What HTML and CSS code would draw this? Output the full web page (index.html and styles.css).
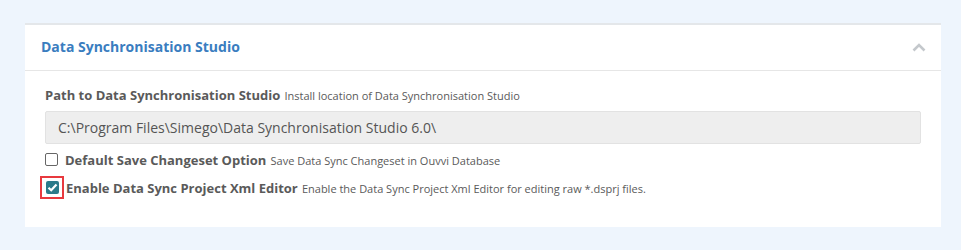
FILE: index.html
```html
<!DOCTYPE html>
<html lang="en">
  <head>
    <meta charset="UTF-8" />
    <meta name="viewport" content="width=device-width, initial-scale=1.0" />
    <title>Settings</title>
    <link rel="stylesheet" href="styles.css">
  </head>

  <body>
    <section class="panel">
      <header class="panel-heading">
        <h2>Data Synchronisation Studio</h2>
        <svg class="chevron" width="14" height="9" viewBox="0 0 14 9">
          <path d="M1.5 7.5 L7 2 L12.5 7.5" fill="none" stroke="#c4c8cc" stroke-width="2.6" />
        </svg>
      </header>

      <div class="panel-body">
        <div class="field">
          <label><b>Path to Data Synchronisation Studio</b> <small>Install location of Data Synchronisation Studio</small></label>
          <input type="text" value="C:\Program Files\Simego\Data Synchronisation Studio 6.0\" readonly />
        </div>

        <div class="check">
          <span class="box"></span>
          <label><b>Default Save Changeset Option</b> <small>Save Data Sync Changeset in Ouvvi Database</small></label>
        </div>

        <div class="check">
          <span class="highlight">
            <span class="box checked">
              <svg width="11" height="9" viewBox="0 0 11 9">
                <path d="M1.5 4.8 L4.2 7.3 L9.5 1.6" fill="none" stroke="#fff" stroke-width="2.2" />
              </svg>
            </span>
          </span>
          <label><b>Enable Data Sync Project Xml Editor</b> <small>Enable the Data Sync Project Xml Editor for editing raw *.dsprj files.</small></label>
        </div>
      </div>
    </section>
  </body>
</html>
```

FILE: styles.css
```css
body {
  margin: 0;
  padding: 23px 20px 0 25px;
  background-color: #eef5fd;
  font-family: "Open Sans", sans-serif;
  color: #5a5a5a;
}

.panel {
  background-color: #fff;
  border-top: 2px solid #e4e7ea;
  height: 202px;
}

.panel-heading {
  display: flex;
  align-items: center;
  justify-content: space-between;
  box-sizing: border-box;
  height: 46px;
  padding: 0 15px 2px 16px;
  border-bottom: 1px solid #e6e6e6;
}

.panel-heading h2 {
  margin: 0;
  font-size: 14px;
  font-weight: 700;
  color: #3a7dbf;
}

.chevron {
  margin-top: 2px;
}

.panel-body {
  padding: 14px 20px 0 20px;
}

.field label {
  display: block;
  line-height: 18px;
}

b {
  font-size: 13px;
  font-weight: 700;
  color: #5a5a5a;
}

small {
  font-size: 11px;
  color: #5a5a5a;
}

.field input {
  display: block;
  box-sizing: border-box;
  width: 100%;
  height: 33px;
  margin-top: 6px;
  padding: 0 12px;
  background-color: #eeeeee;
  border: 1px solid #e2e2e2;
  border-radius: 2px;
  font-family: "Open Sans", sans-serif;
  font-size: 14px;
  color: #555;
}

.check {
  display: flex;
  align-items: center;
  gap: 7px;
  margin-top: 9px;
  height: 13px;
}

.check + .check {
  margin-top: 15px;
}

.box {
  display: flex;
  align-items: center;
  justify-content: center;
  box-sizing: border-box;
  width: 13px;
  height: 13px;
  border: 1px solid #666;
  border-radius: 2px;
  background-color: #fff;
}

.box.checked {
  border: none;
  background-color: #2c7a8a;
}

.highlight {
  display: flex;
  align-items: center;
  justify-content: center;
  box-sizing: border-box;
  width: 24px;
  height: 23px;
  margin: 0 -5px;
  border: 2px solid #e8393e;
}

.check label {
  line-height: 18px;
}
```
